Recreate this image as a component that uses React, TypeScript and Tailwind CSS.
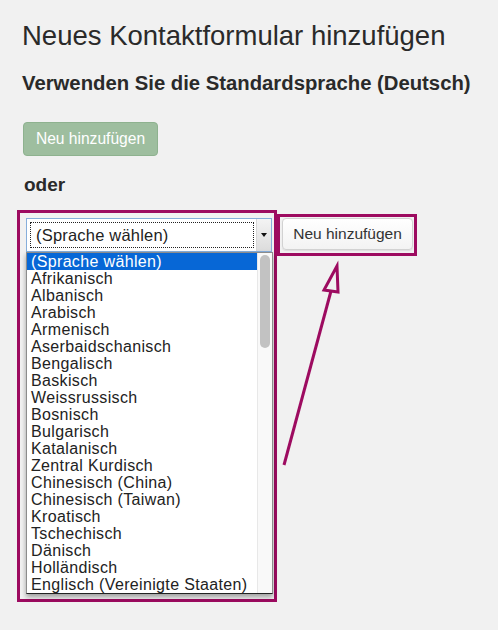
import React from 'react';

const languages = [
  '(Sprache wählen)',
  'Afrikanisch',
  'Albanisch',
  'Arabisch',
  'Armenisch',
  'Aserbaidschanisch',
  'Bengalisch',
  'Baskisch',
  'Weissrussisch',
  'Bosnisch',
  'Bulgarisch',
  'Katalanisch',
  'Zentral Kurdisch',
  'Chinesisch (China)',
  'Chinesisch (Taiwan)',
  'Kroatisch',
  'Tschechisch',
  'Dänisch',
  'Holländisch',
  'Englisch (Vereinigte Staaten)',
];

function LanguageSelect() {
  return (
    <div className="w-[247px]">
      {/* closed select with focus ring */}
      <div className="flex h-[34px] w-[246px] border border-[#86aedb] bg-white">
        <div className="m-[3px] mr-[2px] flex flex-1 items-center border border-dotted border-[#222] pl-[5px] text-[16.5px] tracking-[0.2px] text-[#222]">
          (Sprache wählen)
        </div>
        <div className="flex w-[15px] items-center justify-center border-l border-[#d6d6d6] bg-gradient-to-b from-[#f4f4f4] to-[#dcdcdc]">
          <span className="h-0 w-0 border-x-[3.5px] border-t-[4px] border-x-transparent border-t-[#111]" />
        </div>
      </div>
      {/* open dropdown list */}
      <div className="relative flex border border-[#8c8c8c] border-b-[#222] bg-white shadow-[0_3px_5px_rgba(0,0,0,0.35)]">
        <ul className="flex-1">
          {languages.map((lang, i) => (
            <li
              key={lang}
              className={
                i === 0
                  ? 'h-[17px] bg-[#0767d6] pl-[4px] text-[16px] leading-[17px] tracking-[0.35px] text-white'
                  : 'h-[17px] pl-[4px] text-[16px] leading-[17px] tracking-[0.35px] text-[#222]'
              }
            >
              {lang}
            </li>
          ))}
        </ul>
        <div className="w-[15px] border-l border-[#e8e8e8] bg-[#f9f9f9] px-[2px] pt-[2px]">
          <div className="h-[93px] rounded-full bg-[#c2c2c2]" />
        </div>
      </div>
    </div>
  );
}

export default function App() {
  return (
    <div className="relative min-h-[630px] bg-[#f1f1f1] pl-[22px] pt-[20px] font-['Liberation_Sans',Arial,sans-serif] text-[#2a2a2a]">
      <h1 className="text-[27.5px] leading-[32px]">Neues Kontaktformular hinzufügen</h1>
      <h2 className="mt-[19px] text-[20.3px] font-bold leading-[24px]">
        Verwenden Sie die Standardsprache (Deutsch)
      </h2>
      <button className="ml-px mt-[27px] h-[34px] w-[135px] rounded-[4px] border border-[#8eb28f] bg-[#9ebe9f] text-[15.6px] text-white">
        Neu hinzufügen
      </button>
      <p className="ml-[2px] mt-[18px] text-[19px] font-bold leading-[22px]">oder</p>

      <div className="-ml-[5px] mt-[14px] flex items-start">
        <div className="border-[3px] border-[#9d0b60] pb-[5px] pl-[6px] pr-px pt-[5px]">
          <LanguageSelect />
        </div>
        <div className="mt-[4px] border-[3px] border-[#9d0b60] pb-[3px] pl-[2px] pr-px pt-px">
          <button className="h-[32px] w-[131px] rounded-[4px] border border-[#d2d2d2] bg-gradient-to-b from-white to-[#f3f3f3] text-[15.5px] text-[#333] shadow-[0_1px_1px_rgba(0,0,0,0.08)]">
            Neu hinzufügen
          </button>
        </div>
      </div>

      {/* annotation arrow */}
      <svg className="pointer-events-none absolute left-0 top-0" width="498" height="630">
        <line x1="284" y1="465" x2="331" y2="291" stroke="#9d0b60" strokeWidth="3" />
        <polygon
          points="337,266 324,290 338,292"
          fill="none"
          stroke="#9d0b60"
          strokeWidth="3"
          strokeLinejoin="miter"
        />
      </svg>
    </div>
  );
}
